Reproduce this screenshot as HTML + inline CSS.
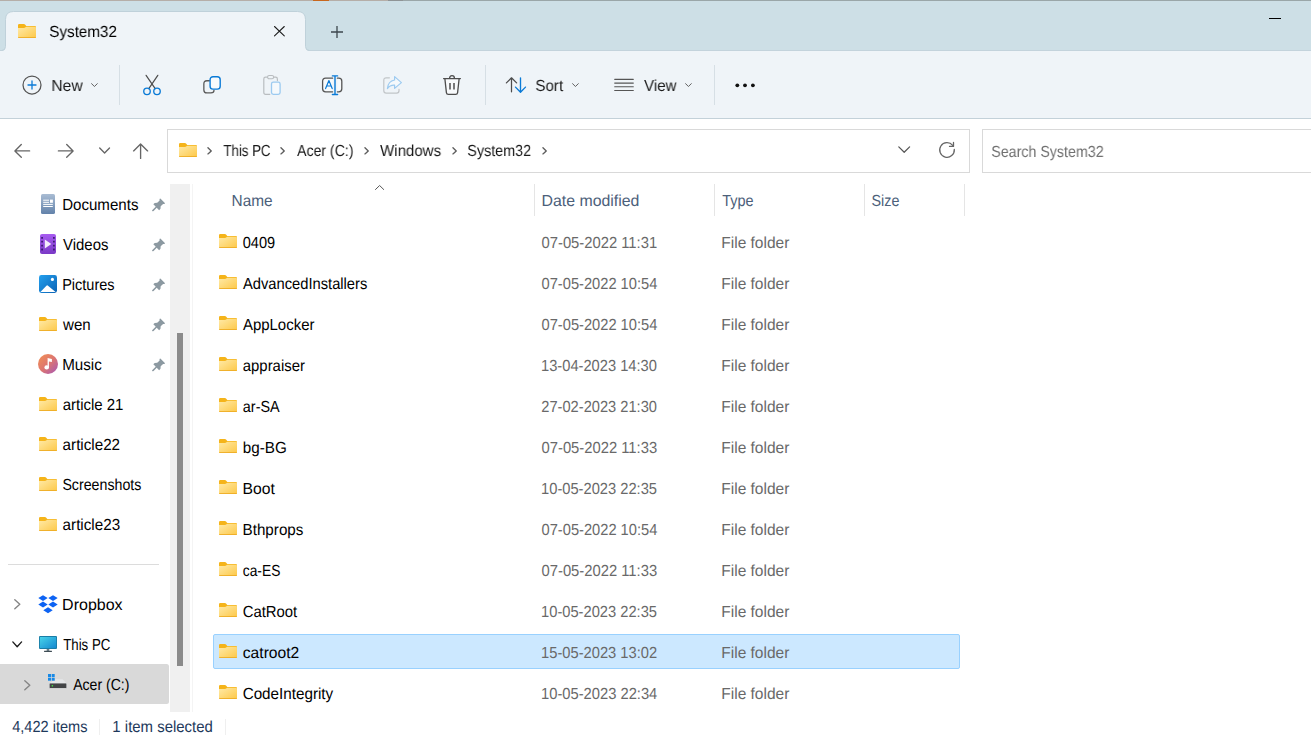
<!DOCTYPE html>
<html lang="en"><head><meta charset="utf-8"><title>System32</title>
<style>
html,body{margin:0;padding:0}
body{width:1311px;height:735px;overflow:hidden;background:#fff;position:relative;font-family:"Liberation Sans",sans-serif}
.a{position:absolute}
#texts .t{position:absolute;text-rendering:geometricPrecision;transform-origin:0 15px;white-space:pre;line-height:19px;height:19px;font-family:"Liberation Sans",sans-serif}
#titlebar{left:0;top:0;width:1311px;height:50px;background:#cddfe6}
#topline{left:0;top:0;width:1311px;height:1px;background:linear-gradient(90deg,#b5aea8 0,#b5aea8 313px,#c8671e 313px,#c8671e 329px,#b5aea8 329px,#b5aea8 388px,#8f9496 388px,#8f9496 403px,#9aa6a8 403px)}
#tbline{left:0;top:50px;width:1311px;height:1px;background:#c3d3dc}
#toolbar{left:0;top:51px;width:1311px;height:67px;background:#eff4f8}
#tbbottom{left:0;top:118px;width:1311px;height:1px;background:#c3d1d9}
.vsep{width:1px;background:#d6dfe5}
.box{border:1px solid #d9d9d9;background:#fff;box-sizing:border-box}
#track{left:170px;top:184px;width:20px;height:528px;background:#f0f0f0}
#thumb{left:177px;top:333px;width:6px;height:332.5px;background:#8b8b8b}
#paneline{left:192px;top:184px;width:1px;height:528px;background:#f4f4f4}
#sidediv{left:8px;top:564px;width:151px;height:1px;background:#dcdcdc}
#sidesel{left:0;top:664px;width:169px;height:39.5px;background:#d9d9d9;border-radius:0 2.5px 2.5px 0}
.hsep{width:1px;top:184px;height:32px;background:#e5e5e5}
#rowsel{left:213px;top:634px;width:747px;height:35px;box-sizing:border-box;background:#cce8ff;border:1px solid #99d1ff;border-radius:2px}
#statdiv2{left:225px;top:719px;width:1px;height:16px;background:#efefef}
#statdiv{left:99px;top:719px;width:1px;height:16px;background:#efefef}
svg{position:absolute;overflow:visible}

</style></head>
<body>
<svg width="0" height="0" style="position:absolute">
<defs>
<linearGradient id="fg" x1="0" y1="0" x2="1" y2="1"><stop offset="0" stop-color="#ffeaa8"/><stop offset="1" stop-color="#fdc848"/></linearGradient>
<linearGradient id="docg" x1="0" y1="0" x2="0" y2="1"><stop offset="0" stop-color="#a9bcd3"/><stop offset="1" stop-color="#6282aa"/></linearGradient>
<linearGradient id="vidg" x1="0" y1="0" x2="0" y2="1"><stop offset="0" stop-color="#a75cf0"/><stop offset="1" stop-color="#7a39c6"/></linearGradient>
<linearGradient id="picg" x1="0" y1="0" x2="1" y2="1"><stop offset="0" stop-color="#23a0ee"/><stop offset="1" stop-color="#0b62b4"/></linearGradient>
<linearGradient id="musg" x1="0" y1="0" x2="1" y2="1"><stop offset="0" stop-color="#f39152"/><stop offset=".5" stop-color="#dd7670"/><stop offset="1" stop-color="#a455b8"/></linearGradient>
<linearGradient id="pcg" x1="0" y1="0" x2="1" y2="1"><stop offset="0" stop-color="#48d3ea"/><stop offset="1" stop-color="#1488cf"/></linearGradient>
<symbol id="fold" viewBox="0 0 18 14">
<path d="M0 1.2Q0 0 1.2 0H6Q6.6 0 7 .45L8.3 2H16.9Q18 2 18 3.1V12.9Q18 14 16.9 14H1.1Q0 14 0 12.9Z" fill="#f5b41a"/>
<path d="M0 3.9H6.1Q6.7 3.9 7.1 3.5L7.9 2.9Q8.2 2.7 8.6 2.7H16.9Q18 2.7 18 3.8V12.9Q18 14 16.9 14H1.1Q0 14 0 12.9Z" fill="url(#fg)"/>
<path d="M.3 13.55H17.7" stroke="#eeab22" stroke-width=".9"/>
</symbol>
<symbol id="pin" viewBox="0 0 14 14">
<path d="M8.9.7 13.3 5.1Q13.6 5.9 12.8 6.2L11.5 6.1 9 8.6 8.8 11.2 7.4 12.6 1.4 6.6 2.8 5.2 5.4 5 7.9 2.5 7.8 1.2Q8.1.4 8.9.7Z" fill="#8c99a1"/><path d="M4.6 9.4.9 13.1" stroke="#8c99a1" stroke-width="1.5" stroke-linecap="round"/>
</symbol>
<symbol id="chev" viewBox="0 0 8 5"><path d="M.6.7 4 4.1 7.4.7" fill="none" stroke="#5e5e5e" stroke-width="1.15" stroke-linecap="round" stroke-linejoin="round"/></symbol>
<symbol id="bc" viewBox="0 0 6 9"><path d="M1 .8 4.8 4.5 1 8.2" fill="none" stroke="#5f5f5f" stroke-width="1.55" stroke-linecap="round" stroke-linejoin="round"/></symbol>
</defs>
</svg>
<div class="a" id="titlebar"></div>
<div class="a" id="topline"></div>
<div class="a" id="tbline"></div>
<div class="a" id="toolbar"></div>
<div class="a" id="tbbottom"></div>
<svg style="left:0;top:0" width="320" height="52" viewBox="0 0 320 52"><path d="M1 51Q5.5 51 5.5 46.5V19.5Q5.5 11.5 13.5 11.5H297.5Q305.5 11.5 305.5 19.5V46.5Q305.5 51 310 51V52H1Z" fill="#eff4f8"/><path d="M1.5 50.5Q5.5 50.5 5.5 46.5V19.5Q5.5 11.5 13.5 11.5H297.5Q305.5 11.5 305.5 19.5V46.5Q305.5 50.5 309.5 50.5" fill="none" stroke="#bfd1da" stroke-width="1"/></svg>
<!-- tab icons -->
<svg style="left:18px;top:24px" width="18" height="14"><use href="#fold"/></svg>
<svg style="left:273.8px;top:25.9px" width="10.8" height="10.4" viewBox="0 0 10.8 10.4"><path d="M.5.5 10.3 9.9M10.3.5.5 9.9" stroke="#1a1a1a" stroke-width="1.05" stroke-linecap="round"/></svg>
<svg style="left:331px;top:26px" width="12" height="12" viewBox="0 0 12 12"><path d="M6 0V12M0 6H12" stroke="#3c474d" stroke-width="1.3"/></svg>
<div class="a" style="left:1269px;top:18px;width:12px;height:1px;background:#000"></div>
<!-- toolbar -->
<svg style="left:21.5px;top:74.5px" width="20" height="20" viewBox="0 0 20 20"><circle cx="10" cy="10" r="9" fill="none" stroke="#555" stroke-width="1.25"/><path d="M10 6V14M6 10H14" stroke="#0a7ad6" stroke-width="1.3" stroke-linecap="round"/></svg>
<svg style="left:90.6px;top:83.3px" width="6.9" height="4.3"><use href="#chev"/></svg>
<div class="a vsep" style="left:119px;top:65px;height:40px"></div>
<!-- cut -->
<svg style="left:142px;top:74px" width="20" height="22" viewBox="0 0 20 22"><path d="M4.1 1.3 13.2 14.7M15.8 1.3 6.8 14.7" stroke="#4d4d4d" stroke-width="1.2" stroke-linecap="round"/><circle cx="5" cy="17.3" r="3.25" fill="none" stroke="#0a7ad6" stroke-width="1.35"/><circle cx="15" cy="17.3" r="3.25" fill="none" stroke="#0a7ad6" stroke-width="1.35"/></svg>
<!-- copy -->
<svg style="left:202px;top:75px" width="20" height="20" viewBox="0 0 20 20"><path d="M7.4 5.75H4.9Q1.85 5.75 1.85 8.8V14.9Q1.85 17.95 4.9 17.95H9Q12 17.95 12 15.3" fill="none" stroke="#5a5a5a" stroke-width="1.3" stroke-linecap="round"/><rect x="8.1" y="1.75" width="10.1" height="12.35" rx="2.9" fill="#f8fafc" stroke="#0a7ad6" stroke-width="1.4"/></svg>
<!-- paste (disabled) -->
<svg style="left:262px;top:74px" width="20" height="22" viewBox="0 0 20 22"><path d="M7.8 20.3H3.6Q1.8 20.3 1.8 18.5V5Q1.8 3.2 3.6 3.2H5.6M11.6 3.2H13.6Q15.4 3.2 15.4 5V6.6" fill="none" stroke="#b9bdc0" stroke-width="1.2" stroke-linecap="round"/><rect x="5.6" y="1.5" width="6" height="3.2" rx="1.5" fill="#eff4f8" stroke="#b9bdc0" stroke-width="1.1"/><rect x="9.5" y="8.2" width="8.6" height="12.2" rx="1.8" fill="#f5f9fc" stroke="#9ccaf0" stroke-width="1.3"/></svg>
<!-- rename -->
<svg style="left:321px;top:74px" width="22" height="22" viewBox="0 0 22 22"><path d="M11.6 4.2H4.6Q1.6 4.2 1.6 7.2V14.8Q1.6 17.8 4.6 17.8H11.6M16.4 4.2H17.8Q20.8 4.2 20.8 7.2V14.8Q20.8 17.8 17.8 17.8H16.4" fill="#f7fafc" stroke="#555" stroke-width="1.3" stroke-linecap="round"/><path d="M11.4 1.9H16.6M11.4 20.5H16.6M14 1.9V20.5" stroke="#0a7ad6" stroke-width="1.4" stroke-linecap="round"/><path d="M4.6 14.6 7.9 6.6 11.2 14.6M5.7 12H10.1" fill="none" stroke="#0a7ad6" stroke-width="1.2" stroke-linejoin="round" stroke-linecap="round"/></svg>
<!-- share (disabled) -->
<svg style="left:382px;top:74px" width="22" height="22" viewBox="0 0 22 22"><path d="M7.4 3.8H4.2Q1.8 3.8 1.8 6.2V16.8Q1.8 19.2 4.2 19.2H14.6Q17 19.2 17 16.8V15.4" fill="none" stroke="#c1c5c8" stroke-width="1.2" stroke-linecap="round"/><path d="M12.6 2.6 19.4 8.6 12.6 14.4V11.2Q8.2 10.8 5.4 14.6Q6 7.2 12.6 6Z" fill="#f5f9fc" stroke="#9ccaf0" stroke-width="1.2" stroke-linejoin="round"/></svg>
<!-- delete -->
<svg style="left:441px;top:74px" width="22" height="22" viewBox="0 0 22 22"><path d="M3.9 4.9 5.4 18.6Q5.6 20.4 7.4 20.4H14.6Q16.4 20.4 16.6 18.6L18.1 4.9Z" fill="#f8fafc" stroke="none"/><path d="M2.6 4.6H19.4M8.6 4.3Q8.6 1.7 11 1.7Q13.4 1.7 13.4 4.3M3.9 4.9 5.4 18.6Q5.6 20.4 7.4 20.4H14.6Q16.4 20.4 16.6 18.6L18.1 4.9" fill="none" stroke="#4d4d4d" stroke-width="1.3" stroke-linecap="round"/><path d="M9 9V15.5M13 9V15.5" stroke="#4d4d4d" stroke-width="1.5"/></svg>
<div class="a vsep" style="left:485px;top:65px;height:40px"></div>
<!-- sort -->
<svg style="left:504px;top:76px" width="24" height="18" viewBox="0 0 24 18"><path d="M7.5 15.8V1.8M2.4 6.9 7.5 1.8 12.6 6.9" fill="none" stroke="#4d4d4d" stroke-width="1.25" stroke-linecap="round" stroke-linejoin="round"/><path d="M16.5 1.8V16M11.5 11.1 16.5 16.2 21.5 11.1" fill="none" stroke="#0a7ad6" stroke-width="1.35" stroke-linecap="round" stroke-linejoin="round"/></svg>
<svg style="left:571.5px;top:83.3px" width="6.9" height="4.3"><use href="#chev"/></svg>
<!-- view -->
<svg style="left:614px;top:78px" width="20" height="15" viewBox="0 0 20 15"><path d="M.7 1.35H19.3M.7 5.07H19.3M.7 8.79H19.3M.7 12.51H19.3" stroke="#555" stroke-width="1.15" stroke-linecap="round"/></svg>
<svg style="left:684.6px;top:83.3px" width="6.9" height="4.3"><use href="#chev"/></svg>
<div class="a vsep" style="left:714px;top:65px;height:40px"></div>
<svg style="left:734px;top:82px" width="22" height="6" viewBox="0 0 22 6"><circle cx="3.3" cy="3.3" r="1.9" fill="#111"/><circle cx="11" cy="3.3" r="1.9" fill="#111"/><circle cx="18.9" cy="3.3" r="1.9" fill="#111"/></svg>
<!-- nav arrows -->
<svg style="left:13px;top:142px" width="18" height="18" viewBox="0 0 18 18"><path d="M16.6 8.9H1.9M8.3 2.5 1.9 8.9 8.3 15.3" fill="none" stroke="#666" stroke-width="1.35" stroke-linecap="round" stroke-linejoin="round"/></svg>
<svg style="left:57px;top:142px" width="18" height="18" viewBox="0 0 18 18"><path d="M1.4 8.9H16.1M9.7 2.5 16.1 8.9 9.7 15.3" fill="none" stroke="#666" stroke-width="1.35" stroke-linecap="round" stroke-linejoin="round"/></svg>
<svg style="left:99px;top:146.5px" width="12" height="8" viewBox="0 0 12 8"><path d="M.7 1 5.6 6 10.5 1" fill="none" stroke="#666" stroke-width="1.35" stroke-linecap="round" stroke-linejoin="round"/></svg>
<svg style="left:132px;top:142px" width="18" height="18" viewBox="0 0 18 18"><path d="M8.6 16.4V2M1.6 8.9 8.6 1.9 15.6 8.9" fill="none" stroke="#666" stroke-width="1.35" stroke-linecap="round" stroke-linejoin="round"/></svg>
<!-- address box -->
<div class="a box" style="left:167px;top:129px;width:803px;height:44px"></div>
<div class="a box" style="left:982px;top:129px;width:340px;height:44px"></div>
<svg style="left:179px;top:143px" width="18" height="14"><use href="#fold"/></svg>
<svg style="left:206.6px;top:147.1px" width="5.4" height="7.8"><use href="#bc"/></svg>
<svg style="left:280.4px;top:147.1px" width="5.4" height="7.8"><use href="#bc"/></svg>
<svg style="left:363.6px;top:147.1px" width="5.4" height="7.8"><use href="#bc"/></svg>
<svg style="left:452px;top:147.1px" width="5.4" height="7.8"><use href="#bc"/></svg>
<svg style="left:541.6px;top:147.1px" width="5.4" height="7.8"><use href="#bc"/></svg>
<svg style="left:897.6px;top:146.3px" width="12.4" height="7.6" viewBox="0 0 13 8"><path d="M.8.9 6.5 6.6 12.2.9" fill="none" stroke="#555" stroke-width="1.3" stroke-linecap="round" stroke-linejoin="round"/></svg>
<svg style="left:938px;top:141px" width="18" height="18" viewBox="0 0 18 18"><path d="M16.3 8.5A7.3 7.3 0 1 1 14.7 4.4" fill="none" stroke="#666" stroke-width="1.3" stroke-linecap="round"/><path d="M15.5 1.4V5.4H11.5" fill="none" stroke="#666" stroke-width="1.3" stroke-linecap="round" stroke-linejoin="round"/></svg>
<!-- sidebar -->
<div class="a" id="track"></div>
<div class="a" id="thumb"></div>
<div class="a" id="paneline"></div>
<div class="a" id="sidediv"></div>
<div class="a" id="sidesel"></div>
<!-- documents -->
<svg style="left:41px;top:194px" width="14" height="20" viewBox="0 0 14 20"><rect width="14" height="20" rx="1.6" fill="url(#docg)"/><path d="M2.2 6.2H8M2.2 8.3H8M2.2 10.4H11.8M2.2 12.5H11.8" stroke="#fff" stroke-width="1"/><rect x="9" y="5.6" width="2.9" height="3.2" fill="#fff"/></svg>
<!-- videos -->
<svg style="left:40px;top:234px" width="16" height="20" viewBox="0 0 16 20"><rect width="16" height="20" rx="2" fill="url(#vidg)"/><g fill="#3d1a73"><rect x="1.2" y="3" width="1.8" height="1.8" rx=".3"/><rect x="1.2" y="6.8" width="1.8" height="1.8" rx=".3"/><rect x="1.2" y="10.7" width="1.8" height="1.8" rx=".3"/><rect x="1.2" y="14.6" width="1.8" height="1.8" rx=".3"/><rect x="13" y="3" width="1.8" height="1.8" rx=".3"/><rect x="13" y="6.8" width="1.8" height="1.8" rx=".3"/><rect x="13" y="10.7" width="1.8" height="1.8" rx=".3"/><rect x="13" y="14.6" width="1.8" height="1.8" rx=".3"/></g><path d="M4.8 5.6 11.3 10 4.8 14.4Z" fill="#f3ecfb"/></svg>
<!-- pictures -->
<svg style="left:39px;top:275px" width="18" height="18" viewBox="0 0 18 18"><rect width="18" height="18" rx="2.4" fill="url(#picg)"/><path d="M1.4 17 7.4 10.7Q8.2 10 9 10.7L16.6 17Z" fill="#fff"/><circle cx="13.4" cy="4.4" r="1.55" fill="#fff"/></svg>
<svg style="left:39px;top:317px" width="18" height="14"><use href="#fold"/></svg>
<!-- music -->
<svg style="left:38px;top:354px" width="20" height="20" viewBox="0 0 20 20"><circle cx="10" cy="10" r="10" fill="url(#musg)"/><path d="M9.6 4.1 13.9 5.1V8.1L10.9 7.4V13.4H9.6Z" fill="#fff"/><ellipse cx="8.7" cy="13.4" rx="2.3" ry="2.1" fill="#fff"/></svg>
<svg style="left:39px;top:397px" width="18" height="14"><use href="#fold"/></svg>
<svg style="left:39px;top:437px" width="18" height="14"><use href="#fold"/></svg>
<svg style="left:39px;top:477px" width="18" height="14"><use href="#fold"/></svg>
<svg style="left:39px;top:517px" width="18" height="14"><use href="#fold"/></svg>
<!-- pins -->
<svg style="left:152px;top:197.5px" width="13.5" height="13.5"><use href="#pin"/></svg>
<svg style="left:152px;top:237.5px" width="13.5" height="13.5"><use href="#pin"/></svg>
<svg style="left:152px;top:277.5px" width="13.5" height="13.5"><use href="#pin"/></svg>
<svg style="left:152px;top:317.5px" width="13.5" height="13.5"><use href="#pin"/></svg>
<svg style="left:152px;top:357.5px" width="13.5" height="13.5"><use href="#pin"/></svg>
<!-- dropbox -->
<svg style="left:14px;top:599px" width="7" height="10.4" viewBox="0 0 7 10.4"><path d="M.8.7 5.8 5.2.8 9.7" fill="none" stroke="#858585" stroke-width="1.4" stroke-linecap="round" stroke-linejoin="round"/></svg>
<svg style="left:38px;top:595px" width="20" height="18.5" viewBox="0 0 20 18.5"><path d="M5 0.15L9.7 3.1 5 6.05 0.3 3.1ZM15 0.15L19.7 3.1 15 6.05 10.3 3.1ZM5 6.55L9.7 9.5 5 12.45 0.3 9.5ZM15 6.55L19.7 9.5 15 12.45 10.3 9.5ZM10 12.35L14.7 15.3 10 18.25 5.3 15.3Z" fill="#0d63f3"/></svg>
<!-- this pc -->
<svg style="left:11.5px;top:641.2px" width="10.4" height="7" viewBox="0 0 10.4 7"><path d="M.8.9 5.2 5.8 9.6.9" fill="none" stroke="#1a1a1a" stroke-width="1.35" stroke-linecap="round" stroke-linejoin="round"/></svg>
<svg style="left:39px;top:636px" width="18" height="16" viewBox="0 0 18 16"><rect x="7.7" y="12.6" width="2.6" height="2.4" fill="#6e7f88"/><rect x="5" y="14.7" width="8" height="1.2" rx=".4" fill="#3f4d55"/><rect width="18" height="13" rx="1" fill="#1a7da6"/><rect x=".9" y=".9" width="16.2" height="11.2" rx=".4" fill="url(#pcg)"/></svg>
<!-- drive -->
<svg style="left:24px;top:679.5px" width="7" height="10.4" viewBox="0 0 7 10.4"><path d="M.8.7 5.8 5.2.8 9.7" fill="none" stroke="#858585" stroke-width="1.4" stroke-linecap="round" stroke-linejoin="round"/></svg>
<svg style="left:48px;top:674px" width="19" height="15" viewBox="0 0 19 15"><path d="M1.6 9.3 7.2 5.2H14.6L18.4 9.3Z" fill="#e4e6e8"/><rect x="1" y="8.9" width="18" height="5.9" rx=".9" fill="#c9cbcd"/><rect x="1.7" y="9.5" width="16.6" height="4.6" rx=".5" fill="#424446"/><rect x="3.6" y="11.1" width="1.5" height="1.5" rx=".5" fill="#45e045"/><rect x="-.3" y="-.3" width="7.3" height="7.3" fill="#d9d9d9"/><g fill="#1789e6"><rect x="0" y="0" width="3" height="3"/><rect x="3.7" y="0" width="3" height="3"/><rect x="0" y="3.7" width="3" height="3"/><rect x="3.7" y="3.7" width="3" height="3"/></g></svg>
<!-- headers -->
<div class="a hsep" style="left:534px"></div>
<div class="a hsep" style="left:714px"></div>
<div class="a hsep" style="left:864px"></div>
<div class="a hsep" style="left:964px"></div>
<svg style="left:374.8px;top:184.9px" width="9.2" height="5" viewBox="0 0 9.2 5"><path d="M.5 4.5 4.6.5 8.7 4.5" fill="none" stroke="#555" stroke-width="1" stroke-linecap="round" stroke-linejoin="round"/></svg>
<div class="a" id="rowsel"></div>
<div class="a" id="statdiv"></div>
<div class="a" id="statdiv2"></div>
<!-- rows -->
<svg style="left:219px;top:234px" width="18" height="14"><use href="#fold"/></svg>
<svg style="left:219px;top:275px" width="18" height="14"><use href="#fold"/></svg>
<svg style="left:219px;top:316px" width="18" height="14"><use href="#fold"/></svg>
<svg style="left:219px;top:357px" width="18" height="14"><use href="#fold"/></svg>
<svg style="left:219px;top:398px" width="18" height="14"><use href="#fold"/></svg>
<svg style="left:219px;top:439px" width="18" height="14"><use href="#fold"/></svg>
<svg style="left:219px;top:480px" width="18" height="14"><use href="#fold"/></svg>
<svg style="left:219px;top:521px" width="18" height="14"><use href="#fold"/></svg>
<svg style="left:219px;top:562px" width="18" height="14"><use href="#fold"/></svg>
<svg style="left:219px;top:603px" width="18" height="14"><use href="#fold"/></svg>
<svg style="left:219px;top:644px" width="18" height="14"><use href="#fold"/></svg>
<svg style="left:219px;top:685px" width="18" height="14"><use href="#fold"/></svg>

<div id="texts">
<span class="t" style="left:49px;top:23px;font-size:16px;transform:translateX(0.24px) scaleX(0.9512);color:#000;will-change:transform">System32</span>
<span class="t" style="left:51px;top:77px;font-size:16px;transform:translateX(0.40px) scaleX(0.9761);color:#1a1a1a;will-change:transform">New</span>
<span class="t" style="left:535px;top:77px;font-size:16px;transform:translateX(0.38px) scaleX(0.9440);color:#1a1a1a;will-change:transform">Sort</span>
<span class="t" style="left:644px;top:77px;font-size:16px;transform:translateX(0.00px) scaleX(0.9461);color:#1a1a1a;will-change:transform">View</span>
<span class="t" style="left:223px;top:142px;font-size:16px;transform:translateX(0.37px) scaleX(0.8292);color:#1a1a1a;will-change:transform">This PC</span>
<span class="t" style="left:297px;top:142px;font-size:16px;transform:translateX(0.06px) scaleX(0.8808);color:#1a1a1a;will-change:transform">Acer (C:)</span>
<span class="t" style="left:380px;top:142px;font-size:16px;transform:translateX(0.08px) scaleX(0.9396);color:#1a1a1a;will-change:transform">Windows</span>
<span class="t" style="left:467px;top:142px;font-size:16px;transform:translateX(0.30px) scaleX(0.8971);color:#1a1a1a;will-change:transform">System32</span>
<span class="t" style="left:991px;top:143px;font-size:16px;transform:translateX(0.31px) scaleX(0.8891);color:#707070;will-change:transform">Search System32</span>
<span class="t" style="left:62px;top:196px;font-size:16px;transform:translateX(0.16px) scaleX(0.9427);color:#000">Documents</span>
<span class="t" style="left:63px;top:236px;font-size:16px;transform:translateX(0.07px) scaleX(0.9325);color:#000">Videos</span>
<span class="t" style="left:62px;top:276px;font-size:16px;transform:translateX(0.17px) scaleX(0.9070);color:#000">Pictures</span>
<span class="t" style="left:63px;top:316px;font-size:16px;transform:translateX(0.04px) scaleX(0.9427);color:#000">wen</span>
<span class="t" style="left:62px;top:356px;font-size:16px;transform:translateX(0.19px) scaleX(0.9479);color:#000">Music</span>
<span class="t" style="left:62px;top:396px;font-size:16px;transform:translateX(0.66px) scaleX(0.9364);color:#000">article 21</span>
<span class="t" style="left:62px;top:436px;font-size:16px;transform:translateX(0.61px) scaleX(0.9502);color:#000">article22</span>
<span class="t" style="left:62px;top:476px;font-size:16px;transform:translateX(0.38px) scaleX(0.8880);color:#000">Screenshots</span>
<span class="t" style="left:62px;top:516px;font-size:16px;transform:translateX(0.61px) scaleX(0.9504);color:#000">article23</span>
<span class="t" style="left:62px;top:596px;font-size:16px;transform:translateX(0.12px) scaleX(1.0004);color:#000">Dropbox</span>
<span class="t" style="left:63px;top:636px;font-size:16px;transform:translateX(0.16px) scaleX(0.8301);color:#000">This PC</span>
<span class="t" style="left:73px;top:676px;font-size:16px;transform:translateX(0.19px) scaleX(0.8790);color:#000">Acer (C:)</span>
<span class="t" style="left:231px;top:192px;font-size:16px;transform:translateX(0.53px) scaleX(0.9628);color:#4c607a">Name</span>
<span class="t" style="left:541px;top:192px;font-size:16px;transform:translateX(0.54px) scaleX(0.9911);color:#4c607a">Date modified</span>
<span class="t" style="left:722px;top:192px;font-size:16px;transform:translateX(0.20px) scaleX(0.9031);color:#4c607a">Type</span>
<span class="t" style="left:871px;top:192px;font-size:16px;transform:translateX(0.49px) scaleX(0.8972);color:#4c607a">Size</span>
<span class="t" style="left:242px;top:234px;font-size:16px;transform:translateX(0.75px) scaleX(0.9102);color:#000">0409</span>
<span class="t" style="left:541px;top:234px;font-size:16px;transform:translateX(0.54px) scaleX(0.9236);color:#696969">07-05-2022 11:31</span>
<span class="t" style="left:721px;top:234px;font-size:16px;transform:translateX(0.27px) scaleX(0.9688);color:#696969">File folder</span>
<span class="t" style="left:242px;top:275px;font-size:16px;transform:translateX(0.92px) scaleX(0.9202);color:#000">AdvancedInstallers</span>
<span class="t" style="left:541px;top:275px;font-size:16px;transform:translateX(0.56px) scaleX(0.9161);color:#696969">07-05-2022 10:54</span>
<span class="t" style="left:721px;top:275px;font-size:16px;transform:translateX(0.27px) scaleX(0.9688);color:#696969">File folder</span>
<span class="t" style="left:242px;top:316px;font-size:16px;transform:translateX(0.92px) scaleX(0.9354);color:#000">AppLocker</span>
<span class="t" style="left:541px;top:316px;font-size:16px;transform:translateX(0.56px) scaleX(0.9161);color:#696969">07-05-2022 10:54</span>
<span class="t" style="left:721px;top:316px;font-size:16px;transform:translateX(0.27px) scaleX(0.9688);color:#696969">File folder</span>
<span class="t" style="left:242px;top:357px;font-size:16px;transform:translateX(0.78px) scaleX(0.9319);color:#000">appraiser</span>
<span class="t" style="left:541px;top:357px;font-size:16px;transform:translateX(0.04px) scaleX(0.9167);color:#696969">13-04-2023 14:30</span>
<span class="t" style="left:721px;top:357px;font-size:16px;transform:translateX(0.27px) scaleX(0.9688);color:#696969">File folder</span>
<span class="t" style="left:242px;top:398px;font-size:16px;transform:translateX(0.82px) scaleX(0.9015);color:#000">ar-SA</span>
<span class="t" style="left:541px;top:398px;font-size:16px;transform:translateX(0.30px) scaleX(0.9155);color:#696969">27-02-2023 21:30</span>
<span class="t" style="left:721px;top:398px;font-size:16px;transform:translateX(0.27px) scaleX(0.9688);color:#696969">File folder</span>
<span class="t" style="left:242px;top:439px;font-size:16px;transform:translateX(0.79px) scaleX(0.9508);color:#000">bg-BG</span>
<span class="t" style="left:541px;top:439px;font-size:16px;transform:translateX(0.54px) scaleX(0.9234);color:#696969">07-05-2022 11:33</span>
<span class="t" style="left:721px;top:439px;font-size:16px;transform:translateX(0.27px) scaleX(0.9688);color:#696969">File folder</span>
<span class="t" style="left:242px;top:480px;font-size:16px;transform:translateX(0.61px) scaleX(0.9807);color:#000">Boot</span>
<span class="t" style="left:541px;top:480px;font-size:16px;transform:translateX(0.04px) scaleX(0.9180);color:#696969">10-05-2023 22:35</span>
<span class="t" style="left:721px;top:480px;font-size:16px;transform:translateX(0.27px) scaleX(0.9688);color:#696969">File folder</span>
<span class="t" style="left:242px;top:521px;font-size:16px;transform:translateX(0.56px) scaleX(0.9497);color:#000">Bthprops</span>
<span class="t" style="left:541px;top:521px;font-size:16px;transform:translateX(0.56px) scaleX(0.9161);color:#696969">07-05-2022 10:54</span>
<span class="t" style="left:721px;top:521px;font-size:16px;transform:translateX(0.27px) scaleX(0.9688);color:#696969">File folder</span>
<span class="t" style="left:242px;top:562px;font-size:16px;transform:translateX(0.77px) scaleX(0.8625);color:#000">ca-ES</span>
<span class="t" style="left:541px;top:562px;font-size:16px;transform:translateX(0.54px) scaleX(0.9234);color:#696969">07-05-2022 11:33</span>
<span class="t" style="left:721px;top:562px;font-size:16px;transform:translateX(0.27px) scaleX(0.9688);color:#696969">File folder</span>
<span class="t" style="left:242px;top:603px;font-size:16px;transform:translateX(0.72px) scaleX(0.9286);color:#000">CatRoot</span>
<span class="t" style="left:541px;top:603px;font-size:16px;transform:translateX(0.04px) scaleX(0.9180);color:#696969">10-05-2023 22:35</span>
<span class="t" style="left:721px;top:603px;font-size:16px;transform:translateX(0.27px) scaleX(0.9688);color:#696969">File folder</span>
<span class="t" style="left:242px;top:644px;font-size:16px;transform:translateX(0.79px) scaleX(0.9766);color:#000">catroot2</span>
<span class="t" style="left:541px;top:644px;font-size:16px;transform:translateX(0.04px) scaleX(0.9191);color:#696969">15-05-2023 13:02</span>
<span class="t" style="left:721px;top:644px;font-size:16px;transform:translateX(0.27px) scaleX(0.9688);color:#696969">File folder</span>
<span class="t" style="left:242px;top:685px;font-size:16px;transform:translateX(0.63px) scaleX(0.9518);color:#000">CodeIntegrity</span>
<span class="t" style="left:541px;top:685px;font-size:16px;transform:translateX(0.01px) scaleX(0.9205);color:#696969">10-05-2023 22:34</span>
<span class="t" style="left:721px;top:685px;font-size:16px;transform:translateX(0.27px) scaleX(0.9688);color:#696969">File folder</span>
<span class="t" style="left:12px;top:718px;font-size:16px;transform:translateX(0.19px) scaleX(0.9100);color:#1e395b">4,422 items</span>
<span class="t" style="left:112px;top:718px;font-size:16px;transform:translateX(0.37px) scaleX(0.9329);color:#1e395b">1 item selected</span>
</div>
</body></html>
